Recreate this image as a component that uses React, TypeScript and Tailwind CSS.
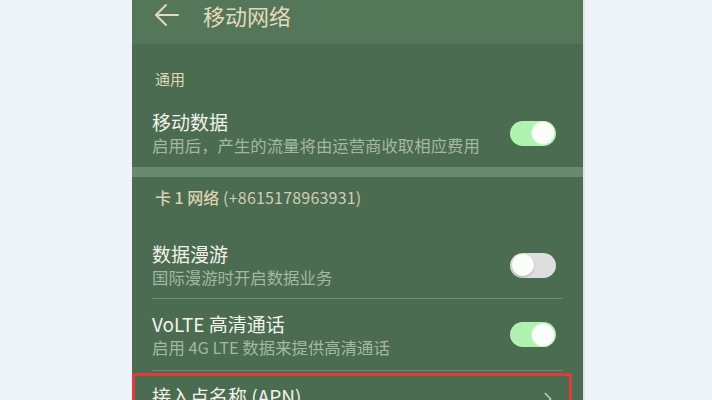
import { ChevronRight } from 'lucide-react';

function Toggle({ on }: { on: boolean }) {
  return (
    <div className={`w-[46px] h-[25px] rounded-full flex items-center px-[2px] ${on ? 'bg-[#b0f2b0] justify-end' : 'bg-[#dedede] justify-start'}`}>
      <div className={`w-[22px] h-[22px] rounded-full bg-[#fbfdfb] ${on ? 'shadow-[0_0_0_1px_#c9f5c9]' : 'shadow-[0_1px_2px_rgba(0,0,0,0.25)]'}`} />
    </div>
  );
}

function SwitchRow({ title, desc, on, height }: { title: string; desc: string; on: boolean; height: string }) {
  return (
    <div className={`flex items-center justify-between pl-[20px] pr-[27px] ${height}`}>
      <div className="flex flex-col">
        <span className="text-[19px] leading-[24px] text-[#f3f2ec]">{title}</span>
        <span className="text-[16.4px] leading-[22px] text-[#a3b8a4]">{desc}</span>
      </div>
      <Toggle on={on} />
    </div>
  );
}

export default function App() {
  return (
    <div className="w-full h-[400px] bg-[#eef2f9] flex overflow-hidden" style={{ fontFamily: '"Noto Sans CJK SC", "Noto Sans", sans-serif' }}>
      <div className="ml-[132px] w-[453px] h-full bg-[#4b6c50] border-r-[2px] border-[#dce8dc] overflow-hidden">
        {/* Header */}
        <div className="h-[44px] bg-[#547759] flex items-start pt-[3px] pl-[22px]">
          <svg width="26" height="24" viewBox="0 0 26 24" fill="none" stroke="#e4d9bd" strokeWidth="2" strokeLinecap="round" strokeLinejoin="round">
            <path d="M24 12H2" />
            <path d="M12 2 2 12l10 10" />
          </svg>
          <span className="ml-[23px] text-[22px] leading-[24px] text-[#e4d9bd]">移动网络</span>
        </div>

        {/* 通用 */}
        <div className="h-[55px] pt-[22px] pl-[23px]">
          <span className="text-[15px] leading-[20px] text-[#e0d6b8]">通用</span>
        </div>
        <SwitchRow title="移动数据" desc="启用后，产生的流量将由运营商收取相应费用" on={true} height="h-[68px]" />

        <div className="h-[10px] bg-[#6a8a6f]" />

        {/* 卡 1 网络 */}
        <div className="h-[55px] pt-[10px] pl-[23px] text-[16px] leading-[20px]">
          <span className="text-[#dcd2b2] font-medium">卡 1 网络</span>
          <span className="text-[#cfcdb6] tracking-[0.2px]"> (+8615178963931)</span>
        </div>
        <SwitchRow title="数据漫游" desc="国际漫游时开启数据业务" on={false} height="h-[66px]" />
        <div className="mx-[20px] h-px bg-[#6d8d72]" />
        <SwitchRow title="VoLTE 高清通话" desc="启用 4G LTE 数据来提供高清通话" on={true} height="h-[71px]" />
        <div className="mx-[20px] h-px bg-[#6d8d72]" />

        {/* APN */}
        <div className="mt-[2px] mr-[11px] border-[3px] border-[#e2393b] rounded-[2px] h-[60px] flex items-start justify-between pt-[8px] pl-[17px] pr-[10px]">
          <span className="text-[19px] leading-[24px] text-[#f3f2ec]">接入点名称 (APN)</span>
          <ChevronRight className="w-[22px] h-[22px] text-[#c9d2c9] mt-[4px]" strokeWidth={1.5} />
        </div>
      </div>
    </div>
  );
}
